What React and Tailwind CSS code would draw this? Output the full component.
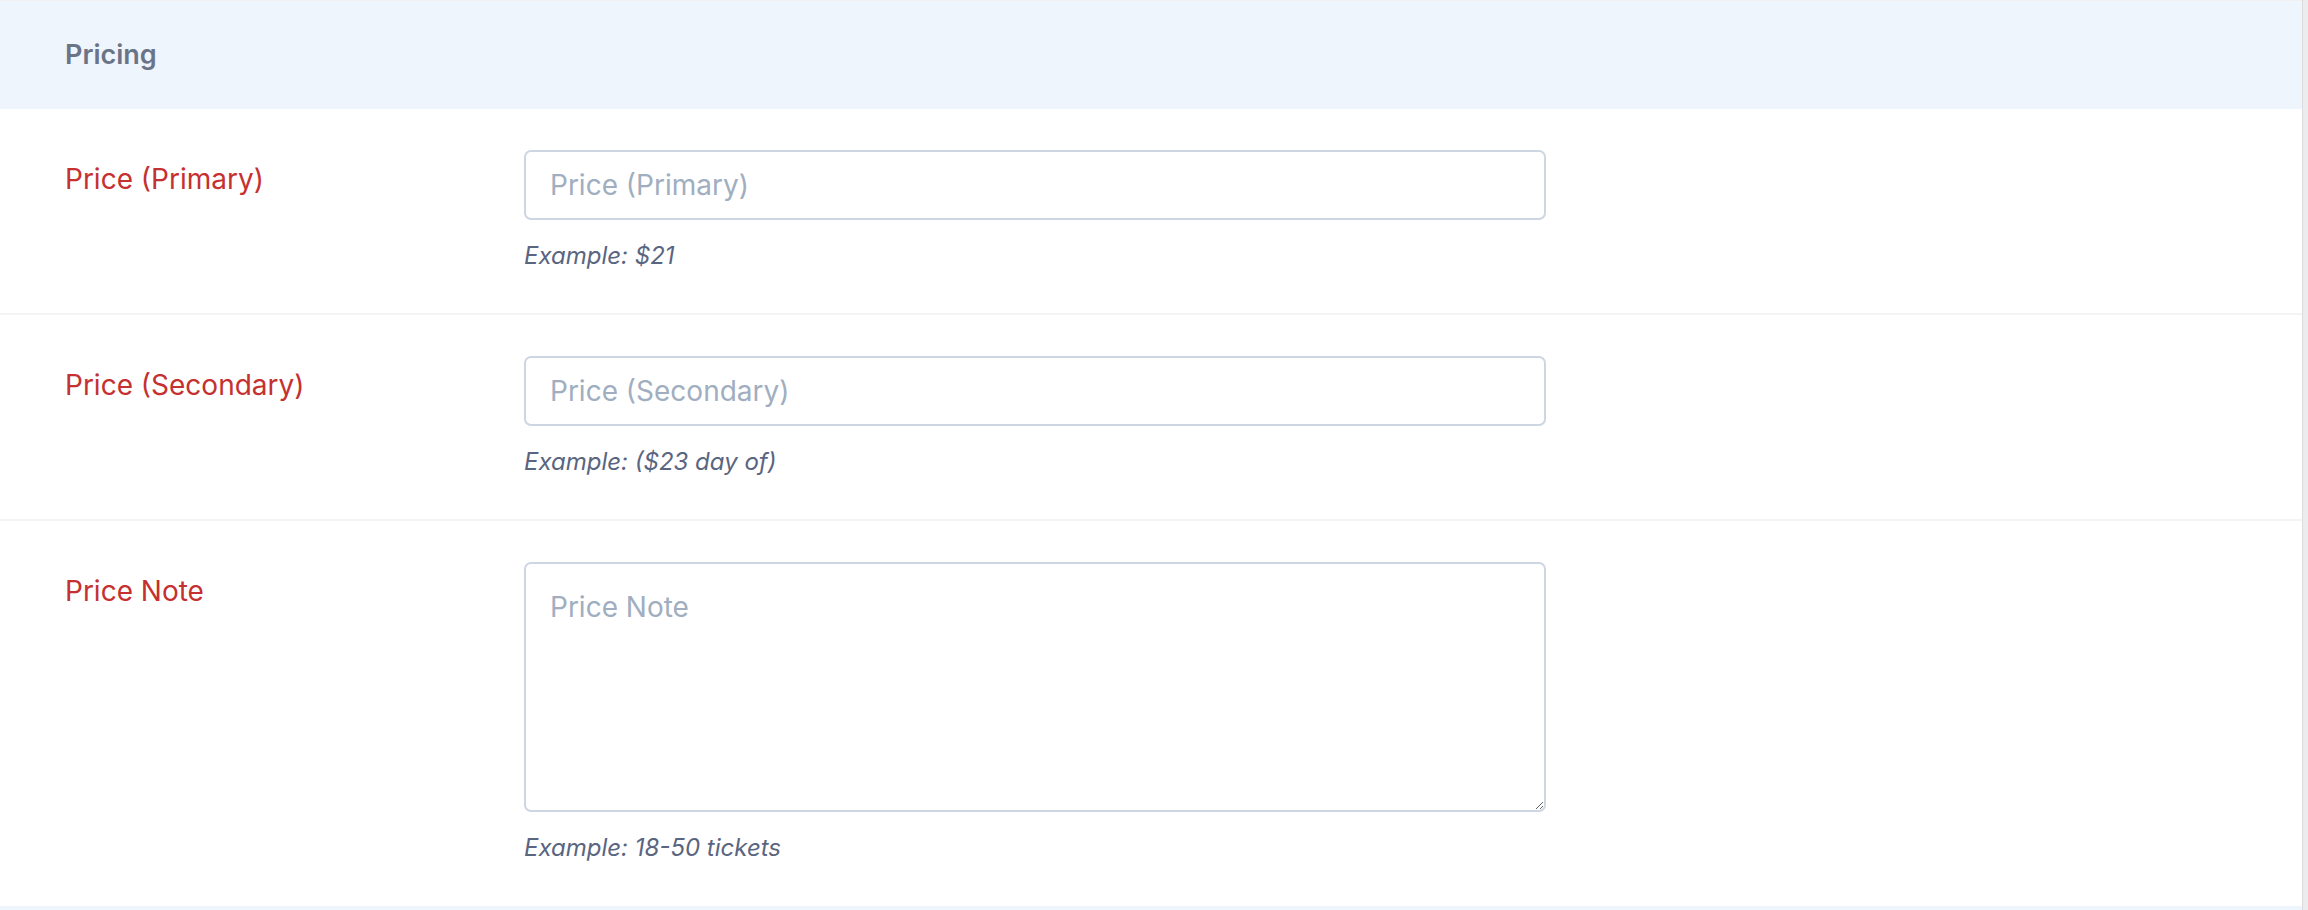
import React from 'react';

const fields = [
  { label: 'Price (Primary)', placeholder: 'Price (Primary)', hint: 'Example: $21' },
  { label: 'Price (Secondary)', placeholder: 'Price (Secondary)', hint: 'Example: ($23 day of)' },
  { label: 'Price Note', placeholder: 'Price Note', hint: 'Example: 18-50 tickets', multiline: true },
];

const FieldRow = ({ field, last }) => (
  <div className={`flex px-[65px] pt-[41px] pb-[39px] ${last ? '' : 'border-b-2 border-[#f3f4f6]'}`}>
    <label className="w-[459px] shrink-0 pt-[8px] text-[28px] leading-[42px] text-[#c53030]">
      {field.label}
    </label>
    <div className="flex w-[1022px] flex-col">
      {field.multiline ? (
        <textarea
          placeholder={field.placeholder}
          className="h-[250px] w-full rounded-[7px] border-2 border-[#cdd6e2] bg-white px-[24px] pt-[22px] pb-[14px] text-[28px] leading-[42px] text-[#2d3748] outline-none placeholder:text-[#a0aec0]"
        />
      ) : (
        <input
          type="text"
          placeholder={field.placeholder}
          className="h-[70px] w-full rounded-[7px] border-2 border-[#cdd6e2] bg-white px-[24px] text-[28px] text-[#2d3748] outline-none placeholder:text-[#a0aec0]"
        />
      )}
      <p className="mt-[18px] text-[24px] leading-[36px] italic text-[#5a6580]">{field.hint}</p>
    </div>
  </div>
);

export default function App() {
  return (
    <div className="flex h-[910px] w-full bg-white font-['Inter',sans-serif]">
      <div className="flex flex-1 flex-col border-t border-[#f0f0f0]">
        {/* section header */}
        <div className="flex h-[108px] items-center bg-[#eef5fd] px-[65px]">
          <h2 className="text-[27px] font-semibold text-[#6b7486]">Pricing</h2>
        </div>

        {fields.map((f, i) => (
          <FieldRow key={f.label} field={f} last={i === fields.length - 1} />
        ))}

        <div className="flex-1" />
        <div className="h-[4px] bg-[#eef5fd]" />
      </div>

      {/* scrollbar track */}
      <div className="w-[6px] border-l border-[#dcdcde] bg-[#ececee]" />
    </div>
  );
}
